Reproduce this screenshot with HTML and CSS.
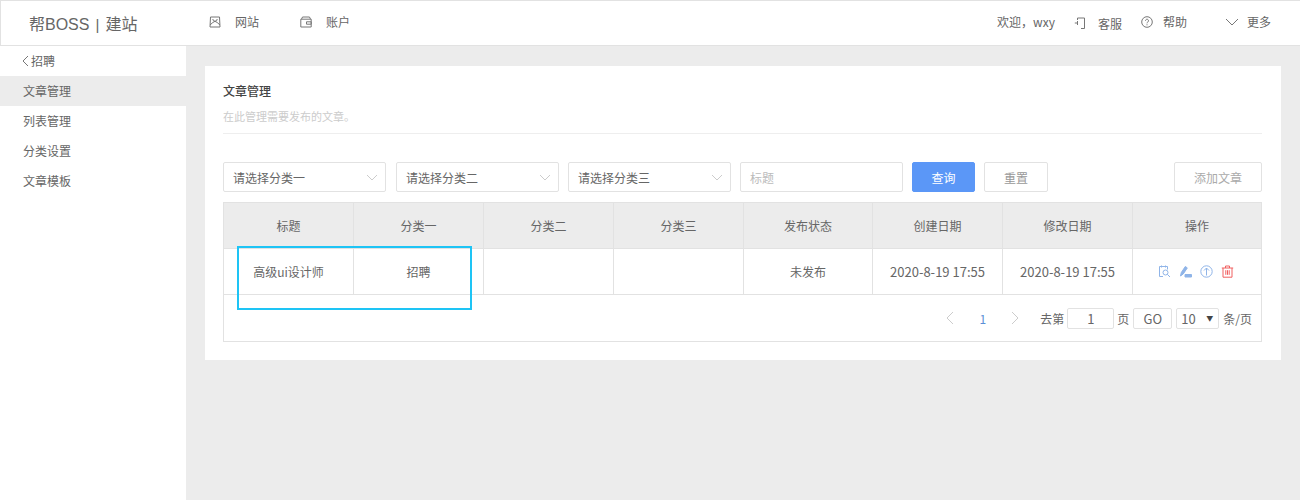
FILE: index.html
```html
<!DOCTYPE html>
<html lang="zh-CN">
  <head>
    <meta charset="UTF-8" />
    <title>文章管理</title>
    <link rel="stylesheet" href="styles.css">
  </head>
  <body>
    <header class="topbar">
      <div class="logo">帮BOSS<span class="logo-sep">|</span>建站</div>
      <nav class="nav">
        <a class="nav-item">
          <svg class="ico" viewBox="0 0 12 12"><path d="M1.500 1h9l.5 10H1zM1 9l2.800-2.500a3 3 0 0 1 4.400 0L11 9M3.800 3a2.200 2.200 0 0 0 4.400 0" /></svg>
          网站
        </a>
        <a class="nav-item">
          <svg class="ico" viewBox="0 0 12 12"><path d="M.8 3.200h10.400v7.800H.8zM1.500 3.200L2.500 1h7l1 2.200M6.500 5.800h4.700v2.400H6.500z" /></svg>
          账户
        </a>
      </nav>
      <div class="user">
        <span class="welcome">欢迎，wxy</span>
        <a class="user-item service">
          <svg class="ico" viewBox="0 0 12 12"><path d="M3.500 3V1h7v10.500H7M3.500 4v4M3.500 6H.8" /></svg>
          客服
        </a>
        <a class="user-item help">
          <svg class="ico" viewBox="0 0 12 12"><circle cx="6" cy="6" r="5.300" /><path d="M4.500 4.700a1.500 1.500 0 1 1 2.300 1.300c-.6.4-.8.7-.8 1.300M6 8.300v1" /></svg>
          帮助
        </a>
        <a class="user-item more">
          <svg class="ico ico-wide" viewBox="0 0 14 12"><path d="M1 3l6 6 6-6" /></svg>
          更多
        </a>
      </div>
    </header>

    <div class="layout">
      <aside class="side">
        <div class="side-back">
          <svg class="back-ico" viewBox="0 0 7 12"><path d="M6 1L1 6l5 5" /></svg>招聘
        </div>
        <a class="side-item active">文章管理</a>
        <a class="side-item">列表管理</a>
        <a class="side-item">分类设置</a>
        <a class="side-item">文章模板</a>
      </aside>

      <main class="main">
        <section class="card">
          <h1 class="title">文章管理</h1>
          <p class="sub">在此管理需要发布的文章。</p>

          <div class="filters">
            <div class="select">请选择分类一<svg class="caret" viewBox="0 0 12 7"><path d="M1 1l5 5 5-5" /></svg></div>
            <div class="select">请选择分类二<svg class="caret" viewBox="0 0 12 7"><path d="M1 1l5 5 5-5" /></svg></div>
            <div class="select">请选择分类三<svg class="caret" viewBox="0 0 12 7"><path d="M1 1l5 5 5-5" /></svg></div>
            <div class="search">标题</div>
            <button class="btn btn-primary">查询</button>
            <button class="btn btn-reset">重置</button>
            <button class="btn btn-add">添加文章</button>
          </div>

          <div class="table-wrap">
            <table class="table">
              <tr>
                <th>标题</th>
                <th>分类一</th>
                <th>分类二</th>
                <th>分类三</th>
                <th class="col-status">发布状态</th>
                <th>创建日期</th>
                <th>修改日期</th>
                <th class="col-ops">操作</th>
              </tr>
              <tr>
                <td>高级ui设计师</td>
                <td>招聘</td>
                <td></td>
                <td></td>
                <td>未发布</td>
                <td class="date">2020-8-19 17:55</td>
                <td class="date">2020-8-19 17:55</td>
                <td>
                  <div class="ops">
                    <svg class="op" viewBox="0 0 13 13"><path d="M9.500 4.500V1.500h-8v10H5M3.500.5v2M7.500.5v2" /><circle cx="7.500" cy="7.500" r="2.500" /><path d="M9.300 9.300l2.700 2.700" /></svg>
                    <svg class="op" viewBox="0 0 13 13"><path d="M1.500 11l.8-3.500 4-6 2 1.400-4 6z" fill="#8fb4e8" /><path d="M6 9.500h6.500V12H6z" fill="#8fb4e8" /></svg>
                    <svg class="op" viewBox="0 0 13 13"><circle cx="6.500" cy="6.500" r="5.700" /><path d="M6.500 10.500V3M4 5.500L6.500 3 9 5.500" /></svg>
                    <svg class="op op-del" viewBox="0 0 13 13"><path d="M.8 3h11.400M4.500 3V1h4v2M2 3v9.200h9V3M4.800 5.200v4.600M6.500 5.200v4.600M8.200 5.200v4.600" /></svg>
                  </div>
                </td>
              </tr>
            </table>
            <div class="pager">
              <svg class="pg-arrow" viewBox="0 0 8 14"><path d="M7 1L1 7l6 6" /></svg>
              <span class="pg-num">1</span>
              <svg class="pg-arrow" viewBox="0 0 8 14"><path d="M1 1l6 6-6 6" /></svg>
              <span class="pg-go">去第</span>
              <span class="pg-box pg-input">1</span>
              <span>页</span>
              <span class="pg-box pg-btn">GO</span>
              <span class="pg-box pg-size">10<i class="pg-tri">▼</i></span>
              <span>条/页</span>
            </div>
          </div>
          <div class="mark"></div>
        </section>
      </main>
    </div>
  </body>
</html>
```

FILE: styles.css
```css
html,
body {
  height: 100%;
  margin: 0;
}

body {
  display: flex;
  flex-direction: column;
  overflow: hidden;
  background-color: #ececec;
  color: #666;
  font-family: "Noto Sans CJK SC", "Liberation Sans", sans-serif;
  font-size: 12px;
}

svg {
  flex: none;
  fill: none;
  stroke-width: 1;
}

/* top bar */
.topbar {
  display: flex;
  align-items: center;
  flex: none;
  box-sizing: border-box;
  height: 46px;
  padding: 0 29px 0 28px;
  background-color: #fff;
  border: 1px solid #e2e2e2;
  border-width: 1px 0 1px 1px;
}

.logo {
  width: 180px;
  color: #666;
  font-family: "Liberation Sans", "Noto Sans CJK SC", sans-serif;
  font-size: 16px;
  white-space: nowrap;
}

.logo-sep {
  margin: 0 6px;
  font-size: 15px;
}

.nav {
  display: flex;
  gap: 41px;
  padding-bottom: 3px;
}

.nav-item,
.user-item {
  display: flex;
  align-items: center;
}

.ico {
  width: 12px;
  height: 12px;
  margin-right: 14px;
  stroke: #777;
}

.ico-wide {
  width: 14px;
  margin-right: 8px;
}

.user {
  display: flex;
  align-items: center;
  margin-left: auto;
  padding-bottom: 3px;
}

.welcome {
  margin-right: 19px;
}

.service {
  margin-right: 19px;
  padding-top: 3px;
}

.service .ico {
  margin-right: 12px;
}

.help {
  margin-right: 38px;
}

.help .ico {
  margin-right: 10px;
}

/* sidebar */
.layout {
  display: flex;
  flex: 1;
  min-height: 0;
}

.side {
  flex: none;
  width: 186px;
  background-color: #fff;
}

.side-back,
.side-item {
  display: block;
  height: 30px;
  padding-left: 23px;
  line-height: 30px;
  color: #666;
}

.side-back {
  padding-left: 22px;
}

.back-ico {
  width: 7px;
  height: 12px;
  margin-right: 2px;
  vertical-align: -1px;
  stroke: #777;
}

.side-item.active {
  background-color: #ececec;
}

/* main */
.main {
  flex: 1;
  padding: 20px 19px 0;
}

.card {
  position: relative;
  box-sizing: border-box;
  height: 294px;
  padding: 18px 19px 0 18px;
  background-color: #fff;
}

.title {
  margin: 0;
  color: #444;
  font-size: 12px;
  font-weight: 500;
  line-height: 14px;
}

.sub {
  height: 25px;
  margin: 10px 0 0;
  border-bottom: 1px solid #eee;
  color: #ccc;
  font-size: 11px;
  line-height: 16px;
}

.filters {
  display: flex;
  gap: 9px;
  margin-top: 28px;
}

.select,
.search {
  display: flex;
  align-items: center;
  justify-content: space-between;
  box-sizing: border-box;
  width: 163px;
  height: 30px;
  padding: 0 7px 0 9px;
  border: 1px solid #e2e2e2;
  border-radius: 2px;
}

.select:first-child {
  margin-right: 1px;
}

.search {
  color: #bbb;
}

.caret {
  width: 12px;
  height: 7px;
  stroke: #ccc;
}

.btn {
  box-sizing: border-box;
  width: 64px;
  height: 30px;
  padding: 0;
  border: 1px solid #e2e2e2;
  border-radius: 2px;
  background-color: #fff;
  color: #999;
  font-family: inherit;
  font-size: 12px;
}

.btn-primary {
  width: 63px;
  border-color: #5b97f7;
  background-color: #5b97f7;
  color: #fff;
}

.btn-add {
  width: 88px;
  margin-left: auto;
  color: #aaa;
}

/* table */
.table-wrap {
  margin-top: 10px;
  border: 1px solid #e2e2e2;
}

.table {
  width: 100%;
  border-collapse: separate;
  border-spacing: 0;
  table-layout: fixed;
}

.table th,
.table td {
  box-sizing: border-box;
  height: 46px;
  padding: 0;
  border-right: 1px solid #e2e2e2;
  border-bottom: 1px solid #e2e2e2;
  text-align: center;
  font-weight: 400;
}

.table th {
  width: 130px;
  background-color: #ececec;
}

.table .col-status {
  width: 129px;
}

.table .col-ops {
  width: auto;
}

.table th:last-child,
.table td:last-child {
  border-right: 0;
}

.table .date {
  font-size: 13px;
}

.ops {
  display: flex;
  justify-content: center;
  gap: 8px;
  padding-right: 3px;
}

.op {
  width: 13px;
  height: 13px;
  stroke: #8fb4e8;
}

.op-del {
  stroke: #f06060;
}

.pager {
  display: flex;
  align-items: center;
  justify-content: flex-end;
  height: 46px;
  padding-right: 9px;
  color: #666;
}

.pg-arrow {
  width: 8px;
  height: 14px;
  stroke: #ccc;
}

.pg-num {
  margin: 0 25px 0 26px;
  color: #5b8fd6;
}

.pg-go {
  margin-left: 21px;
  margin-right: 3px;
}

.pg-box {
  display: flex;
  align-items: center;
  justify-content: center;
  box-sizing: border-box;
  height: 21px;
  border: 1px solid #e2e2e2;
  border-radius: 2px;
  font-size: 13px;
}

.pg-input {
  width: 47px;
  margin-right: 3px;
}

.pg-btn {
  width: 39px;
  margin: 0 4px;
}

.pg-size {
  justify-content: space-between;
  width: 43px;
  margin-right: 4px;
  padding: 0 5px 0 4px;
}

.pg-tri {
  color: #444;
  font-size: 7px;
  font-style: normal;
}

/* annotation drawn over the table */
.mark {
  position: absolute;
  left: 32px;
  top: 180px;
  box-sizing: border-box;
  width: 235px;
  height: 64px;
  border: 2px solid #1ec4f5;
}
```
